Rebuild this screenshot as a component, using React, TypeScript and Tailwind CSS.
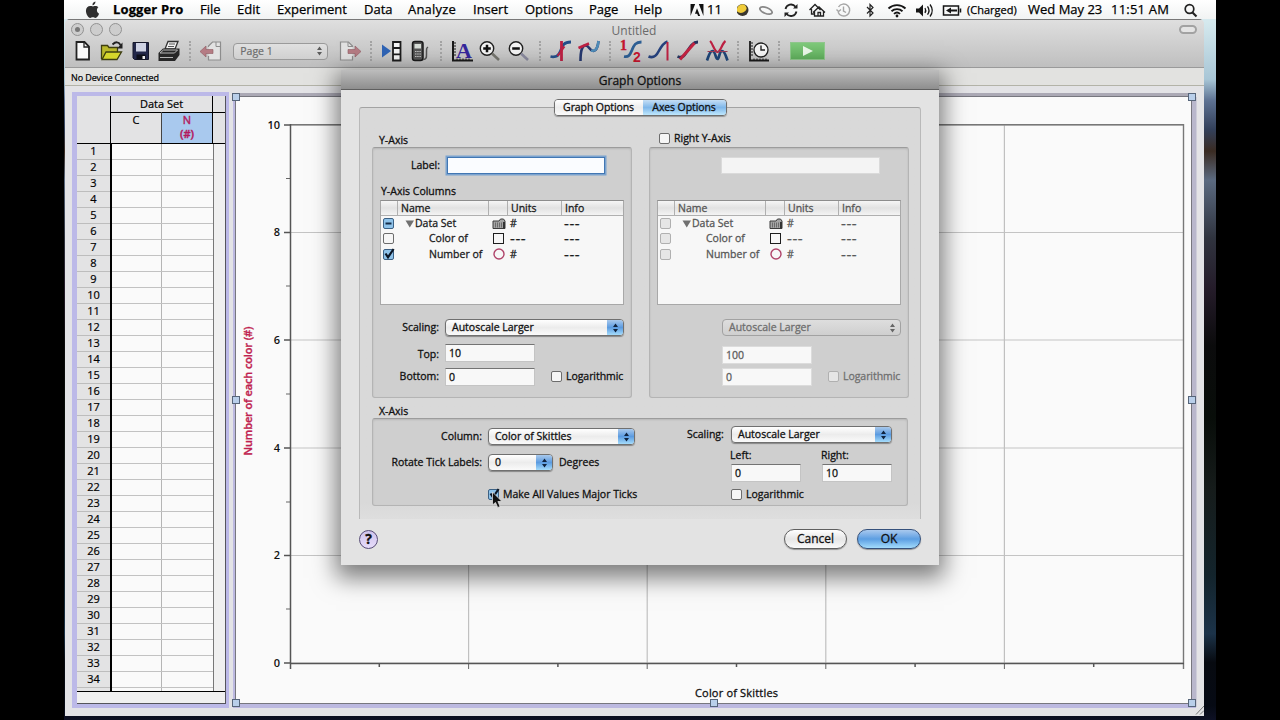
import React from 'react';

interface MenuItem {
  label: string;
  className: string;
}

const MENUS: MenuItem[] = [
  { label: 'Logger Pro', className: 'w-[87px] font-bold tracking-[0.12px]' },
  { label: 'File', className: 'w-[37px]' },
  { label: 'Edit', className: 'w-[40px]' },
  { label: 'Experiment', className: 'w-[87px]' },
  { label: 'Data', className: 'w-[44px]' },
  { label: 'Analyze', className: 'w-[65px] tracking-[0.2px]' },
  { label: 'Insert', className: 'w-[52px]' },
  { label: 'Options', className: 'w-[64px]' },
  { label: 'Page', className: 'w-[45px]' },
  { label: 'Help', className: 'w-[55px]' },
];

const ROWS = Array.from({ length: 34 }, (_, i) => i + 1);

const Cell: React.FC<{ children: React.ReactNode }> = ({ children }) => (
  <div className="w-[28.7px] shrink-0 flex justify-center">
    <svg width="24" height="24" viewBox="0 0 24 24" fill="none">
      {children}
    </svg>
  </div>
);

const Sep: React.FC = () => (
  <div className="w-[12.8px] shrink-0 flex justify-center">
    <div className="h-5 border-l-2 border-dotted border-[#a4a4a4]" />
  </div>
);

// Small up/down arrows at the right end of a popup button
const Arrows: React.FC<{ color: string }> = ({ color }) => (
  <svg width="7" height="10" viewBox="0 0 7 10" fill={color}>
    <path d="M3.5 0.6 6 4H1zM3.5 9.4 6 6H1z" />
  </svg>
);

interface PopupProps {
  value: string;
  className: string;
  disabled?: boolean;
}

const Popup: React.FC<PopupProps> = ({ value, className, disabled }) => (
  <div
    className={`${className} h-[17px] shrink-0 flex items-stretch justify-between rounded-[4px] border overflow-hidden ${
      disabled
        ? 'border-[#a2a2a2] bg-linear-to-b from-[#dedede] to-[#cfcfcf] text-[#6e6e6e]'
        : 'border-[#707070] bg-linear-to-b from-white via-[#ececec] to-[#fafafa] shadow-[0_1px_1px_rgba(0,0,0,0.35)]'
    }`}
  >
    <span className="pl-[6px] leading-[15px]">{value}</span>
    {disabled ? (
      <span className="w-[15px] flex items-center justify-center">
        <Arrows color="#666" />
      </span>
    ) : (
      <span className="w-[16px] flex items-center justify-center bg-linear-to-b from-[#a9c9ec] via-[#5b9be0] to-[#a5dcfb]">
        <Arrows color="#10243f" />
      </span>
    )}
  </div>
);

const Check: React.FC<{ state?: 'on' | 'mixed' | 'off'; disabled?: boolean }> = ({ state = 'off', disabled }) => (
  <svg width="13" height="13" viewBox="0 0 13 13" className="shrink-0 overflow-visible" fill="none">
    <rect
      x="1.5"
      y="1.5"
      width="10"
      height="10"
      rx="1.5"
      fill={state === 'off' ? (disabled ? '#e6e6e6' : '#f6f6f6') : '#8fc3ea'}
      stroke={disabled ? '#b0b0b0' : state === 'off' ? '#6c6c6c' : '#3c6184'}
    />
    {state === 'mixed' && <path d="M3.5 6.5h6" stroke="#152c48" strokeWidth="2" />}
    {state === 'on' && <path d="M3.5 5.5 6 9.3 11.6 1" stroke="#0b1626" strokeWidth="2.200" />}
  </svg>
);

const Field: React.FC<{ value?: string; className: string; disabled?: boolean }> = ({ value, className, disabled }) => (
  <div
    className={`${className} shrink-0 bg-[#f8f8f8] pl-[3px] leading-[16px] ${
      disabled ? 'border border-[#dcdcdc] text-[#5e5e5e]' : 'border border-[#c4c4c4] border-t-[#737373]'
    }`}
  >
    {value}
  </div>
);

const FolderIcon: React.FC = () => (
  <svg width="14" height="11" viewBox="0 0 14 11">
    <path d="M1 3h6l1.500-2h3l1.500 2v7.500H1z" fill="#a5a5a5" stroke="#3d3d3d" />
    <path d="M3.500 4.500v5M5.500 4.500v5M7.500 4.500v5M9.500 4.500v5" stroke="#6c6c6c" />
    <path d="M11 4h2v6.500h-2z" fill="#333" />
  </svg>
);

const Dashes: React.FC = () => <span className="text-[15px] tracking-[0.6px]">---</span>;

interface ColumnRow {
  name: string;
  units?: string;
  check: 'on' | 'mixed' | 'off';
  icon: React.ReactNode;
  root?: boolean;
}

const COLUMN_ROWS: ColumnRow[] = [
  { name: 'Data Set', units: '#', check: 'mixed', icon: <FolderIcon />, root: true },
  {
    name: 'Color of',
    check: 'off',
    icon: <div className="w-[11px] h-[11px] border-[1.5px] border-[#1e1e1e]" />,
  },
  {
    name: 'Number of',
    units: '#',
    check: 'on',
    icon: (
      <svg width="12" height="12" viewBox="0 0 12 12" fill="none">
        <circle cx="6" cy="6" r="5" stroke="#b0446a" strokeWidth="1.400" />
      </svg>
    ),
  },
];

const ColumnTable: React.FC<{ disabled?: boolean }> = ({ disabled }) => (
  <div
    className={`w-[244px] h-[105px] bg-[#f7f7f7] border border-[#a8a8a8] border-t-[#8d8d8d] ${
      disabled ? 'text-[#585858]' : 'text-[#1c1c1c]'
    }`}
  >
    <div className="h-[15px] flex leading-[14px] bg-linear-to-b from-[#f6f6f6] via-[#e2e2e2] to-[#f4f4f4] border-b border-[#b0b0b0]">
      <div className="w-[17px] border-r border-[#b0b0b0]" />
      <div className="w-[91px] border-r border-[#b0b0b0] pl-[3px]">Name</div>
      <div className="w-[19px] border-r border-[#b0b0b0]" />
      <div className="w-[54px] border-r border-[#b0b0b0] pl-[3px]">Units</div>
      <div className="pl-[3px]">Info</div>
    </div>
    {COLUMN_ROWS.map((row) => (
      <div key={row.name} className="h-[15.3px] flex items-center leading-[15px]">
        <div className="w-[17px] pl-[1px]">
          <Check state={disabled ? 'off' : row.check} disabled={disabled} />
        </div>
        <div className={`w-[91px] flex items-center ${row.root ? 'pl-[7px]' : 'pl-[31px]'}`}>
          {row.root && (
            <svg width="10" height="8" viewBox="0 0 10 8" className="shrink-0">
              <path d="M0.5 0.5h8.5L4.75 7.5z" fill="#707070" />
            </svg>
          )}
          <span className="whitespace-nowrap">{row.name}</span>
        </div>
        <div className="w-[19px] flex justify-center">{row.icon}</div>
        <div className="w-[54px] h-[15px] pl-[2px]">{row.units ?? <Dashes />}</div>
        <div className="h-[15px] pl-[2px]">
          <Dashes />
        </div>
      </div>
    ))}
  </div>
);

const MenuBar: React.FC = () => (
  <div className="h-[19px] flex items-center bg-linear-to-b from-white to-[#f1f3f3] text-[13px] leading-[17px] text-black whitespace-nowrap [-webkit-text-stroke:0.25px]">
    <svg width="15" height="18" viewBox="0 0 14 17" className="ml-[21px] mr-[13px]" fill="#2f2f2f">
      <path d="M9.8 0.5C8 0.8 6.8 2.2 7 4c1.700 0 2.900-1.700 2.800-3.500zM12.600 6C11.500 4.600 9.800 4.400 8.800 4.800c-1.100.4-1.600.4-2.700 0C3.500 4 .8 5.800.8 9.200c0 3.200 2.200 6.800 4 6.800.9 0 1.400-.6 2.500-.6s1.500.6 2.400.6c1.500 0 2.900-2.300 3.500-4-2.500-1.200-2.600-4.700-.6-6z" />
    </svg>
    {MENUS.map((m) => (
      <span key={m.label} className={m.className}>
        {m.label}
      </span>
    ))}
    <svg width="14" height="12" viewBox="0 0 14 13" className="ml-[1px]" fill="#111">
      <path d="M0 0h5L0 13zM14 0H9l5 13zM7 4.500l3.400 8.500H8.200l-1-2.500H4.800z" />
    </svg>
    <span className="w-[33px] pl-[3px]">11</span>
    {/* status items, right half of the bar */}
    <svg width="472" height="18" viewBox="737 0 472 18" fill="none" className="shrink-0 -mr-[472px]">
      <circle cx="742.500" cy="9" r="6" fill="#3a3730" />
      <path d="M736.800 10a6 6 0 0 1 6-6.800c3.500.6 5 4.300 2.500 6.800-3 2.500-6 2.500-8.500 0z" fill="#f0cc3a" />
      <ellipse cx="766" cy="9.500" rx="6.500" ry="3" transform="rotate(22 766 9.500)" stroke="#888" strokeWidth="1.800" />
      <path d="M785.500 8a5.600 5.600 0 0 1 10-2.200M796.500 10.500a5.600 5.600 0 0 1-10 2.200" stroke="#222" strokeWidth="1.800" />
      <path d="M797.500 3v4.500H793zM784.500 16v-4.500h4.500z" fill="#222" />
      <path d="m809.500 9 5.500-5.500 5.500 5.500M811.500 8v5h3M813 11.500l6-5.500 6 5.500M814.500 10.500v4.500h9v-5M818 14.500v-3h2.500v3" stroke="#222" strokeWidth="1.300" />
      <path d="M838.500 6a6 6 0 1 1-.5 5M843.500 5.500V10l2.500 1.500M836.500 8.500l2 2 2.500-2" stroke="#a5a5a5" strokeWidth="1.400" />
      <path d="m867 6 6 6-3 3V3.500l3 3-6 6" stroke="#222" strokeWidth="1.200" />
      <path d="M888.500 7.500a12.500 12.500 0 0 1 17 0M891.500 10.300a8 8 0 0 1 11 0M894 12.900a4.500 4.500 0 0 1 6 0" stroke="#151515" strokeWidth="1.900" />
      <circle cx="897" cy="15" r="1.400" fill="#151515" />
      <path d="M916 7.500h3l4-4v12l-4-4h-3z" fill="#151515" />
      <path d="M925 7q1.500 2.500 0 5M927.500 5.300q3 4.200 0 8.400M930 3.500q4.500 6 0 12" stroke="#151515" strokeWidth="1.300" />
      <path d="M943.500 5h15v9h-15zM960.500 7.500v4" stroke="#151515" strokeWidth="1.500" />
      <path d="M946 9.500l5-3v2h6v2h-6v2z" fill="#151515" />
      <circle cx="1189.500" cy="8" r="4.300" stroke="#222" strokeWidth="1.700" />
      <path d="m1192.500 11.500 4 4" stroke="#222" strokeWidth="2.200" />
    </svg>
    <span className="ml-[230px] w-[61px] text-[11px]">(Charged)</span>
    <span className="w-[83px]">Wed May 23</span>
    <span className="tracking-[0.2px]">11:51 AM</span>
  </div>
);

const Toolbar: React.FC = () => (
  <div className="h-[26px] flex items-center pl-[4px]">
    <Cell>
      <path d="M5.500 3h8l4.500 4.500V20.500h-12.500z" fill="#fafafa" stroke="#222" strokeWidth="1.800" />
      <path d="M13 3v5H18" stroke="#222" strokeWidth="1.300" />
    </Cell>
    <Cell>
      <path d="M1.500 20V6.500h6l1.500 2h8.500V13" fill="#b9b82c" stroke="#3e3e10" strokeWidth="1.300" />
      <path d="m2 20.500 4-7.500h15.500l-4.500 7.500z" fill="#d6d62c" stroke="#3e3e10" strokeWidth="1.300" />
      <path d="M12.500 5.500q5-4.500 8 .5" stroke="#222" strokeWidth="2" />
      <path d="M22.500 3.500v6H17z" fill="#222" />
    </Cell>
    <Cell>
      <path d="M4 3.500h15.500v17h-14L4 19z" fill="#23284a" stroke="#16182a" />
      <path d="M7 4h10v8.500H7z" fill="#cfd3e4" />
      <path d="M7.500 15.500h9v5h-9z" fill="#0d0e18" />
      <path d="M13.500 17h2.500v3h-2.500z" fill="#eee" />
    </Cell>
    <Cell>
      <path d="M8 10 11 2.500h10L18 10z" fill="#f2f2f2" stroke="#333" strokeWidth="1.300" />
      <path d="M12 5h6M11 7.500h6" stroke="#555" />
      <path d="m1.500 14 4.500-4.500h16.500V16l-4.500 6H1.500z" fill="#262626" />
      <path d="m3 14 3.500-3h14l-3 3zM3 18.500h13" stroke="#b5b5b5" />
    </Cell>
    <Sep />
    <Cell>
      <path d="M9.500 8V7l4-4h8v18h-12v-4" fill="#e2e2e2" stroke="#8d8d8d" strokeWidth="1.200" />
      <path d="M17 3v4.500h4.500" stroke="#8d8d8d" />
      <path d="m1 12.500 6-5.500v3.500h7v4H7V18z" fill="#b57c84" stroke="#8f5a62" strokeWidth=".6" />
    </Cell>
    <div className="ml-[8px] mr-[7.500px] w-[95px] h-[17px] shrink-0 flex items-center justify-between rounded-[4px] border border-[#9a9a9a] bg-linear-to-b from-[#e0e0e0] to-[#d0d0d0] pl-[6px] pr-[4px] text-[10.500px] leading-[15px] text-[#6d6d6d] [-webkit-text-stroke:0.2px]">
      Page 1
      <Arrows color="#5c5c5c" />
    </div>
    <Cell>
      <path d="M14.500 8V7l-4-4h-8v18h12v-4" fill="#e2e2e2" stroke="#8d8d8d" strokeWidth="1.200" />
      <path d="M10 3v4.500h4.500" stroke="#8d8d8d" />
      <path d="m23 12.500-6-5.500v3.500h-7v4h7V18z" fill="#b57c84" stroke="#8f5a62" strokeWidth=".6" />
    </Cell>
    <Sep />
    <Cell>
      <path d="M2 5.500v13l9-6.500z" fill="#2f64b5" />
      <path d="M13 3h7.500v18.500H13zM13 9h7.500M13 15.300h7.500" fill="#f4f4f4" stroke="#1c1c1c" strokeWidth="1.800" />
    </Cell>
    <Cell>
      <rect x="4.500" y="2.500" width="10.500" height="19" rx="2.500" fill="#555" stroke="#1a1a1a" strokeWidth="1.500" />
      <path d="M6.500 5h6.500v4.500H6.500z" fill="#d7ddd7" />
      <path d="M7 12.500h6M7 15h6M7 17.500h6" stroke="#c4c4c4" strokeDasharray="1.500 .7" />
      <path d="M15 20.500c4 0 3.500-3 3.500-7s0-4.500 1.500-5.500" stroke="#555" strokeWidth="1.500" />
    </Cell>
    <Sep />
    <Cell>
      <path d="M3 2v19.500h20" stroke="#1a1a1a" strokeWidth="2" />
      <path d="M4 4h2M4 7h2M4 10h2M4 13h2M4 16h2M7 19.500v2M10 19.500v2M13 19.500v2M16 19.500v2M19 19.500v2" stroke="#1a1a1a" />
      <text x="6" y="18.500" fontFamily="Liberation Serif" fontSize="22" fontWeight="bold" fill="#35279b">A</text>
    </Cell>
    <Cell>
      <circle cx="9" cy="9.500" r="6.700" fill="#f4f4f4" stroke="#222" strokeWidth="1.400" />
      <path d="M5.200 9.500h7.600M9 5.700v7.600" stroke="#111" strokeWidth="2.500" />
      <path d="m14 14.500 7 6.500" stroke="#76766f" strokeWidth="2.600" />
    </Cell>
    <Cell>
      <circle cx="9" cy="9.500" r="6.700" fill="#f4f4f4" stroke="#222" strokeWidth="1.400" />
      <path d="M5.200 9.500h7.600" stroke="#111" strokeWidth="2.500" />
      <path d="m14 14.500 7 6.500" stroke="#8a8a9e" strokeWidth="2.600" />
    </Cell>
    <Sep />
    <Cell>
      <path d="M1.500 17.500c5 1 8 0 10-5.500S14.500 3 22 3" stroke="#24508a" strokeWidth="2.800" />
      <path d="M12.500 2v20" stroke="#bd2143" strokeWidth="2.800" />
      <path d="m8.500 17 7-9.500" stroke="#bd2143" strokeWidth="2" />
    </Cell>
    <Cell>
      <path d="M3.500 22C3.500 12 5 6.500 8.500 6.500c4 0 4 6 8 5.500 3.500-.5 4.500-5 5-10" stroke="#26386e" strokeWidth="2.600" />
      <path d="M14 11.500c5 1.500 7-3 7.500-9.500" stroke="#4f8cb8" strokeWidth="2.600" />
      <path d="m1.500 9 10.500-4.500" stroke="#bd2143" strokeWidth="2.600" />
    </Cell>
    <Sep />
    <Cell>
      <path d="M5 17.500c5 1 6-2 8-6.500C15 6 16.500 3 22.500 3" stroke="#2d5f94" strokeWidth="2.800" />
      <text x="1" y="11" fontFamily="Liberation Serif" fontSize="14" fontWeight="bold" fill="#c5152e" stroke="#c5152e" strokeWidth=".4">1</text>
      <text x="14" y="22.500" fontFamily="Liberation Sans" fontSize="14" fontWeight="bold" fill="#c5152e">2</text>
    </Cell>
    <Cell>
      <path d="M1.500 17.500c5 2 8-1 10-5C14.500 7 17 3.500 20.500 2.500" stroke="#26427e" strokeWidth="2.600" />
      <path d="M20.500 3v18.500" stroke="#bd2143" strokeWidth="2" />
    </Cell>
    <Cell>
      <path d="M1.500 17.500c5 2 7-1 9.500-5S16.500 3 22 3" stroke="#27345f" strokeWidth="2.800" />
      <path d="M4 20.500 18.500 4" stroke="#c42341" strokeWidth="3" />
    </Cell>
    <Cell>
      <path d="M2 21.500C3.500 18 4.500 12 7.500 12s3 8 5 8 1.500-8 4.500-8 4 6 5.500 9.500" stroke="#1f4678" strokeWidth="2.700" />
      <path d="M5 2c2.500 2 4.500 11 7.500 11S17 4.500 20.500 2" stroke="#bd2143" strokeWidth="2.200" />
      <path d="M2.500 12.500h20" stroke="#9a3a55" strokeWidth="1" />
    </Cell>
    <Sep />
    <Cell>
      <path d="M4 2v19.500h19" stroke="#1a1a1a" strokeWidth="1.800" />
      <path d="M5 4h2M5 7h2M5 10h2M5 13h2M5 16h2M8 19.500v2M11 19.500v2M14 19.500v2M17 19.500v2M20 19.500v2" stroke="#1a1a1a" />
      <circle cx="15" cy="11" r="7" fill="#f4f4f4" stroke="#222" strokeWidth="1.300" />
      <path d="M15 6.500V11h4" stroke="#222" strokeWidth="1.400" />
    </Cell>
    <Sep />
    <div className="ml-[5px] w-[35px] h-[18px] shrink-0 flex items-center justify-center bg-linear-to-b from-[#7fc97b] to-[#5fae5c] border border-[#8fc78c]">
      <svg width="10" height="10" viewBox="0 0 10 10" fill="#e9f7e7">
        <path d="M0 0v10l10-5z" />
      </svg>
    </div>
  </div>
);

const DataTable: React.FC = () => (
  <div className="w-[149px] h-[608px] flex flex-col bg-[#f0f0f0] border-r border-b border-[#55555c] text-[11px] text-black [-webkit-text-stroke:0.2px]">
    <div className="h-[47px] shrink-0 flex bg-[#e3e3e4]">
      <div className="w-[33px] shrink-0" />
      <div className="w-[103px] shrink-0 flex flex-col border-x border-black text-center">
        <div className="h-[17px] border-b border-black leading-[16px]">Data Set</div>
        <div className="flex-1 flex leading-[15px]">
          <div className="-mt-[1px] w-[51px] border-r border-[#444]">C</div>
          <div className="flex-1 bg-[#a9c9ee] text-[#b3195e] leading-[14px] [-webkit-text-stroke:0.4px]">
            N
            <br />
            <span className="font-semibold">(#)</span>
          </div>
        </div>
      </div>
      <div className="flex-1">
        <div className="h-[17px] border-b border-black" />
      </div>
    </div>
    <div className="h-[549px] flex overflow-hidden border-t border-b border-black">
      <div className="w-[35px] shrink-0 bg-[#e3e3e4] border-r-2 border-black text-center">
        {ROWS.map((n) => (
          <div key={n} className="h-[16px] leading-[14px] border-b border-[#bdbdbd]">
            {n}
          </div>
        ))}
        <div className="leading-[14px]">35</div>
      </div>
      <div className="w-[102px] shrink-0 bg-[#fafafa] border-r border-[#777]">
        {ROWS.map((n) => (
          <div key={n} className="h-[16px] flex border-b border-[#c2c2c2]">
            <div className="w-[50px] border-r border-[#b5b5b5]" />
          </div>
        ))}
        <div className="h-[16px] w-[50px] border-r border-[#b5b5b5]" />
      </div>
    </div>
  </div>
);

const X_LINES = [468.6, 647.2, 825.8, 1004.4];
const X_MINOR = [379.3, 557.9, 736.5, 915.1, 1093.7];
const Y_LABELS = [
  { y: 125, label: '10' },
  { y: 232.5, label: '8' },
  { y: 340, label: '6' },
  { y: 448, label: '4' },
  { y: 555.5, label: '2' },
  { y: 663, label: '0' },
];
const HANDLES = [
  [236, 97],
  [1192, 97],
  [236, 400],
  [1192, 400],
  [236, 703],
  [714, 703],
  [1192, 703],
];

const Graph: React.FC = () => (
  <svg width="970" height="618" viewBox="229 92 970 618" className="shrink-0 text-[11px]">
    <path d="M233 93h963v615H233z" fill="#bcb9e0" />
    <path d="M240 93h956v4H240z" fill="#aba9b5" />
    <path d="M1192 97h4.500v610h-4.500z" fill="#b9b7cc" />
    <path d="M235.500 96.500h956v607h-956z" fill="#fafafa" stroke="#77777f" />
    {Y_LABELS.map(({ y, label }) => (
      <g key={label}>
        <path d={`M291 ${y}H1183`} stroke="#c4c4c4" />
        <path d={`M284 ${y}h6`} stroke="#555" strokeWidth="1.500" />
        <text x="280" y={y + 3.8} textAnchor="end" fill="#111" fontWeight="600">{label}</text>
      </g>
    ))}
    {[178.5, 286, 394, 502, 609].map((y) => (
      <path key={y} d={`M286 ${y}h4`} stroke="#666" />
    ))}
    {X_LINES.map((x) => (
      <g key={x}>
        <path d={`M${x} 125V663`} stroke="#c0c0c0" strokeWidth="1.200" />
        <path d={`M${x} 663v6`} stroke="#666" />
      </g>
    ))}
    {X_MINOR.map((x) => (
      <path key={x} d={`M${x} 664v3`} stroke="#555" strokeWidth="1.500" />
    ))}
    <path d="M290 124.700H1183.500V669" fill="none" stroke="#777" strokeWidth="1.400" />
    <path d="M290.500 124V669M290 663.400h894" fill="none" stroke="#555" strokeWidth="1.500" />
    <text x="736.500" y="696.500" textAnchor="middle" fill="#111" stroke="#111" strokeWidth=".3" textLength="83">Color of Skittles</text>
    <text transform="translate(251.500 391) rotate(-90)" textAnchor="middle" fill="#c01f50" stroke="#c01f50" strokeWidth=".35" textLength="129" fontWeight="600">
      Number of each color (#)
    </text>
    {HANDLES.map(([x, y]) => (
      <rect key={`${x}-${y}`} x={x - 3.5} y={y - 3.5} width="7" height="7" fill="#b9cfea" stroke="#56657a" />
    ))}
  </svg>
);

const AxisPanel: React.FC<{ right?: boolean }> = ({ right }) => (
  <div className="w-[260px] h-[251px] flex flex-col rounded-[3px] border border-[#b4b4b4] border-t-[#9c9c9c] bg-[#cfcfcf] shadow-[inset_0_1px_2px_rgba(0,0,0,0.12)]">
    <div className="h-[35px] shrink-0 flex items-center justify-end pr-[25px]">
      {!right && <span className="mr-[7px] pt-[1px]">Label:</span>}
      {right ? (
        <div className="w-[159px] h-[17px] mr-[3px] bg-[#f4f4f4] border border-[#dadada]" />
      ) : (
        <div className="w-[158px] h-[17px] mr-[1px] bg-[#fafcff] border border-[#4277b3] shadow-[0_0_0_1.5px_#7ba3cf]" />
      )}
    </div>
    <div className="h-[17px] pl-[8px] leading-[17px]">{right ? '' : 'Y-Axis Columns'}</div>
    <div className="pl-[7px]">
      <ColumnTable disabled={right} />
    </div>
    <div className="mt-[14px] h-[17px] flex items-center justify-end pr-[7px]">
      {!right && <span className="mr-[6px]">Scaling:</span>}
      <Popup value="Autoscale Larger" className="w-[179px]" disabled={right} />
    </div>
    <div className={`${right ? 'mt-[10px] mb-[5px]' : 'mt-[8px] mb-[7px]'} h-[17px] flex items-center`}>
      <span className="w-[66px] text-right pt-[4px]">{right ? '' : 'Top:'}</span>
      <Field value={right ? '100' : '10'} className="ml-[6px] w-[90px] h-[18px]" disabled={right} />
    </div>
    <div className="h-[17px] flex items-center">
      <span className="w-[66px] text-right pt-[1px]">{right ? '' : 'Bottom:'}</span>
      <Field value="0" className="ml-[6px] mr-[15px] w-[90px] h-[18px]" disabled={right} />
      <Check disabled={right} />
      <span className={`ml-[3px] pt-[1px] tracking-[-0.05px] ${right ? 'text-[#707070]' : ''}`}>Logarithmic</span>
    </div>
  </div>
);

const XAxisPanel: React.FC = () => (
  <div className="w-[536px] h-[88px] flex rounded-[3px] border border-[#b4b4b4] border-t-[#9c9c9c] bg-[#cfcfcf] shadow-[inset_0_1px_2px_rgba(0,0,0,0.12)]">
    <div className="w-[300px] pt-[9px]">
      <div className="h-[17px] flex items-center">
        <span className="w-[109px] mr-[6px] text-right">Column:</span>
        <Popup value="Color of Skittles" className="w-[147px]" />
      </div>
      <div className="mt-[9px] h-[17px] flex items-center">
        <span className="w-[109px] mr-[6px] text-right">Rotate Tick Labels:</span>
        <Popup value="0" className="w-[65px]" />
        <span className="ml-[6px]">Degrees</span>
      </div>
      <div className="mt-[15px] h-[16px] flex items-center pl-[114px]">
        <Check state="on" />
        <span className="ml-[3px] pt-[1px] whitespace-nowrap">Make All Values Major Ticks</span>
      </div>
    </div>
    <div className="flex-1 pt-[7px] pl-[14px]">
      <div className="h-[17px] flex items-center">
        <span className="w-[38px] mr-[6px]">Scaling:</span>
        <Popup value="Autoscale Larger" className="w-[161px]" />
      </div>
      <div className="pl-[43px] pt-[5px] flex leading-[15px]">
        <span className="w-[91px]">Left:</span>
        <span>Right:</span>
      </div>
      <div className="pl-[44px] pt-[1px] flex gap-[21px]">
        <Field value="0" className="w-[70px] h-[18px]" />
        <Field value="10" className="w-[70px] h-[18px]" />
      </div>
      <div className="mt-[4px] h-[16px] flex items-center pl-[43px]">
        <Check />
        <span className="ml-[3px] pt-[1px]">Logarithmic</span>
      </div>
    </div>
  </div>
);

const Dialog: React.FC = () => (
  <div className="absolute left-[341px] top-[70px] w-[598px] h-[495px] bg-[#e3e3e3] text-[10.500px] text-[#111] [-webkit-text-stroke:0.3px] shadow-[0_8px_22px_5px_rgba(0,0,0,0.5)]">
    <div className="h-[20px] border-b border-[#5f5f5f] bg-linear-to-b from-[#bdbdbd] to-[#8e8e8e] text-center text-[12px] leading-[21px]">
      Graph Options
    </div>
    <div className="mt-[17px] ml-[18px] w-[562px] h-[412px] border border-b-0 border-[#b9b9b9] border-t-[#a3a3a3] rounded-t-[3px] bg-linear-to-b from-[#d9d9d9] from-96% to-[#dedede]">
      <div className="-mt-[9px] mx-auto h-[17px] w-[173px] flex rounded-[4px] border border-[#6e6e6e] overflow-hidden text-center leading-[15px] shadow-[0_1px_1px_rgba(0,0,0,0.3)] tracking-[-0.1px]">
        <div className="w-[88px] bg-linear-to-b from-white via-[#ececec] to-[#fbfbfb]">Graph Options</div>
        <div className="flex-1 bg-linear-to-b from-[#c6dff5] via-[#7fb7ea] to-[#bfe8fd]">Axes Options</div>
      </div>
      <div className="h-[31px] flex">
        <span className="w-[298px] pl-[19px] pt-[17px] leading-[15px]">Y-Axis</span>
        <span className="flex items-center h-[15px] mt-[15px]">
          <Check />
          <span className="ml-[3px]">Right Y-Axis</span>
        </span>
      </div>
      <div className="ml-[12px] flex gap-[17px]">
        <AxisPanel />
        <AxisPanel right />
      </div>
      <div className="ml-[19px] mt-[6px] h-[14px] leading-[15px]">X-Axis</div>
      <div className="ml-[12px]">
        <XAxisPanel />
      </div>
    </div>
    <div className="mt-[10px] px-[18px] h-[20px] flex items-center text-[12px]">
      <div className="w-[19px] h-[19px] rounded-full border-[1.500px] border-[#574c77] bg-linear-to-b from-[#cfc3ec] to-[#e6dcfa] text-center font-bold text-[14px] leading-[16px]">
        ?
      </div>
      <div className="ml-auto w-[63px] h-[20px] rounded-full border border-[#5f5f5f] bg-linear-to-b from-white via-[#e6e6e6] to-[#fafafa] text-center leading-[17px] shadow-[0_1px_1px_rgba(0,0,0,0.35)]">
        Cancel
      </div>
      <div className="ml-[10px] w-[64px] h-[20px] rounded-full border border-[#35517c] bg-linear-to-b from-[#a9c9ee] via-[#5c9ee2] to-[#a3dcfc] text-center leading-[17px] shadow-[0_1px_1px_rgba(0,0,0,0.35)]">
        OK
      </div>
    </div>
  </div>
);

const App: React.FC = () => (
  <div className="relative w-[1280px] h-[720px] overflow-hidden bg-black pl-[64px] font-['Open_Sans','Noto_Sans',sans-serif] font-medium">
    <div className="w-[1152px] h-[720px] flex flex-col bg-[linear-gradient(180deg,#d5e9ee_3%,#a8c6d6_11%,#5d7192_14%,#33405a_18%,#3a2b22_21%,#5b6a80_25%,#30343f_33%,#251c2a_40%,#0b0b0c_48%,#080d09_58%,#161c1b_68%,#13242c_80%,#1c3349_88%,#070a10_92%,#060a14_98%,#0d1024_100%)]">
      <MenuBar />
      <div className="ml-[1px] w-[1139px] h-[697px] flex flex-col rounded-t-[5px] bg-[#e3e3e6] overflow-hidden">
        <div className="h-[49px] bg-linear-to-b from-[#dfdfdf] to-[#bfbfbf] border-t border-[#777] border-b border-b-[#9a9a9a]">
          <div className="h-[18px] flex items-center justify-between pl-[6px] pr-[7px] text-[12px] text-[#6a6a6a]">
            <div className="w-[60px] flex gap-[6px]">
              {[0, 1, 2].map((n) => (
                <div key={n} className="w-[13px] h-[13px] rounded-full border border-[#929292] bg-[#cdcdcd] flex items-center justify-center">
                  {n === 0 && <div className="w-[5px] h-[5px] rounded-full bg-[#777]" />}
                </div>
              ))}
            </div>
            <span className="pt-[3px]">Untitled</span>
            <div className="w-[60px] flex justify-end">
              <div className="w-[18px] h-[9px] rounded-full border-2 border-[#a2a2a2] bg-[#e4e4e4]" />
            </div>
          </div>
          <Toolbar />
        </div>
        <div className="h-[18px] bg-[#e2e2e0] border-b border-[#b3b3a8] pl-[6px] text-[9px] leading-[19px] text-black tracking-[-0.1px] [-webkit-text-stroke:0.2px]">
          No Device Connected
        </div>
        <div className="h-[630px] flex pt-[6px] pl-[7px]">
          <div className="w-[157px] h-[616px] shrink-0 pl-[5px] pt-[4px] bg-[#bcb9e8]">
            <DataTable />
          </div>
          <Graph />
          <svg width="10" height="10" viewBox="0 0 10 10" className="-ml-[4px] mt-[613px] shrink-0" stroke="#777">
            <path d="M1 9.500 9 1M5 9.500l4-4" />
          </svg>
        </div>
      </div>
    </div>
    <Dialog />
    <svg width="14" height="20" viewBox="0 0 14 20" className="absolute left-[491px] top-[491px]">
      <path d="M1.500 1v13l3-2.500 2.200 5 2.400-1-2.200-5H11z" fill="#111" stroke="#ddd" strokeWidth=".8" />
    </svg>
  </div>
);

export default App;
